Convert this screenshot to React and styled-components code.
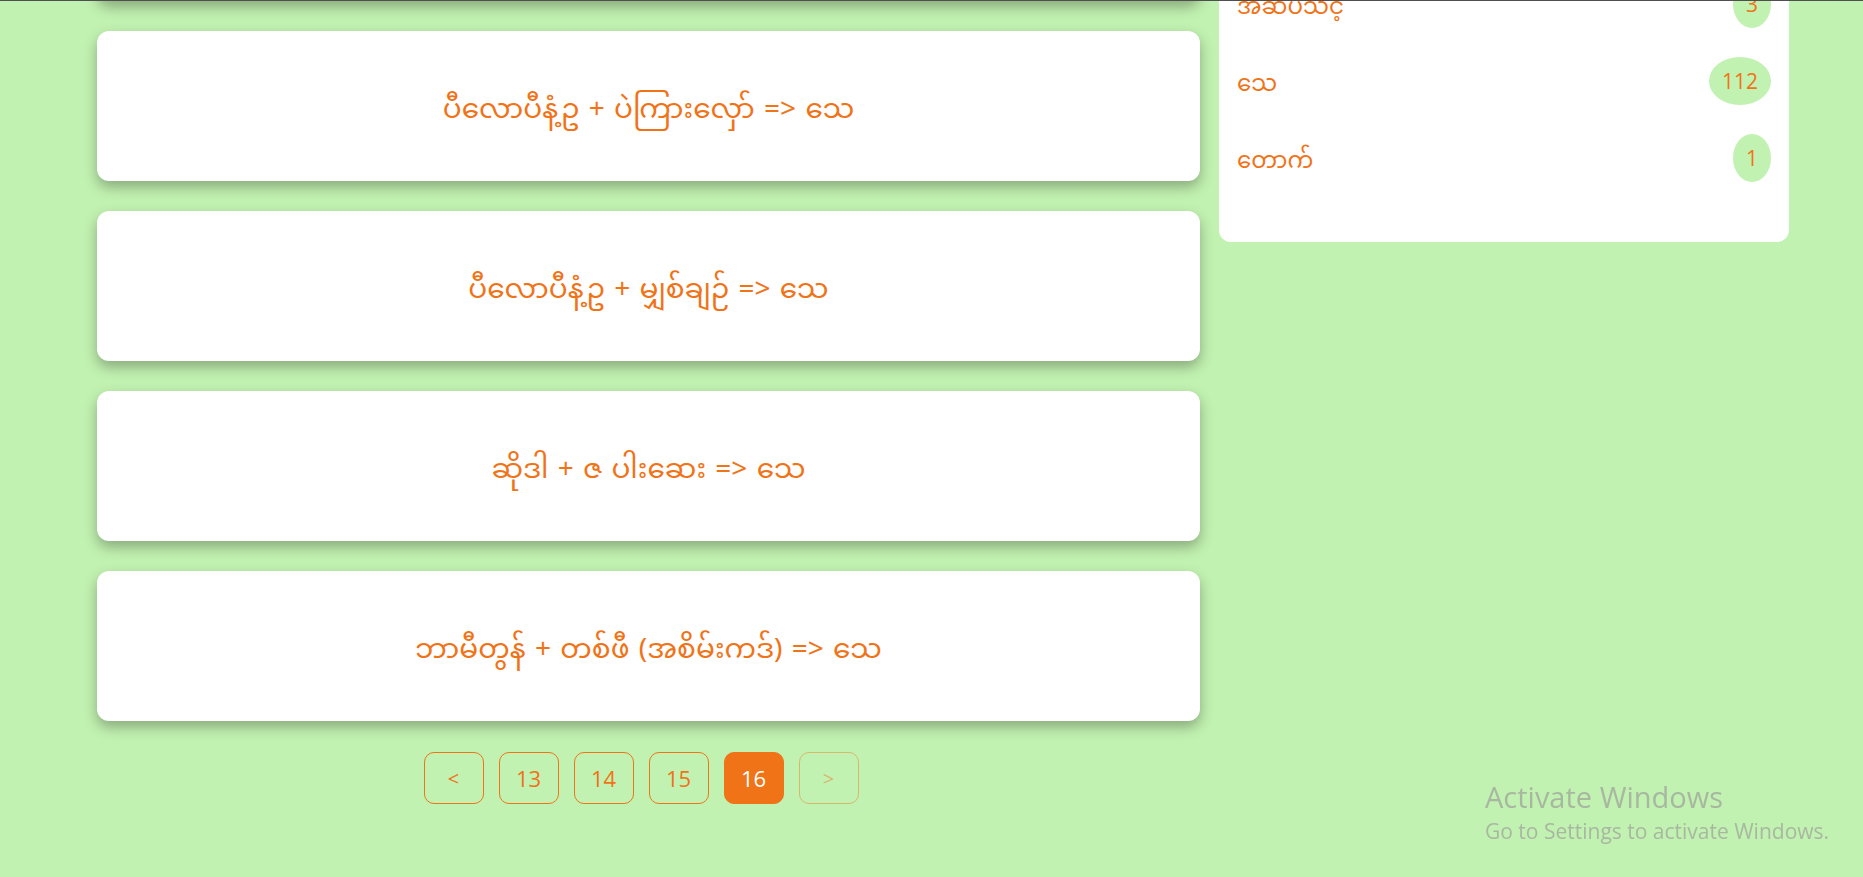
import React from "react";
import styled, { createGlobalStyle } from "styled-components";

const ORANGE = "#f07318";
const GREEN = "#c2f2b1";
const MM = `"Noto Sans Myanmar", "Myanmar Text", Padauk, "Noto Sans", sans-serif`;
const UI = `"Open Sans", "Noto Sans", sans-serif`;

const Global = createGlobalStyle`
  html, body {
    margin: 0;
    padding: 0;
    background: ${GREEN};
    overflow: hidden;
  }
  body {
    font-family: ${UI};
    min-height: 100vh;
  }
`;

const WindowEdge = styled.div`
  position: fixed;
  top: 0;
  left: 0;
  right: 0;
  height: 1px;
  background: #4f4f4f;
  z-index: 10;
`;

const Page = styled.div`
  display: flex;
  align-items: flex-start;
  gap: 19px;
  padding: 30px 0 60px 97px;
  margin-top: -179px;
`;

const Main = styled.main`
  width: 1103px;
  display: flex;
  flex-direction: column;
  gap: 30px;
`;

const Card = styled.div`
  height: 150px;
  box-sizing: border-box;
  padding-top: 10px;
  background: #fff;
  border-radius: 12px;
  box-shadow: 0 6px 14px rgba(0, 0, 0, 0.3);
  display: flex;
  align-items: center;
  justify-content: center;
  font-family: ${MM};
  font-size: 28px;
  word-spacing: 2px;
  color: ${ORANGE};
`;

const Pager = styled.nav`
  display: flex;
  justify-content: center;
  padding-top: 1px;
`;

const PageBtn = styled.button`
  width: 60px;
  height: 52px;
  margin-right: 15px;
  border: 1px solid ${ORANGE};
  border-radius: 10px;
  background: ${(p) => (p.$active ? ORANGE : "transparent")};
  color: ${(p) => (p.$active ? "#fff" : ORANGE)};
  opacity: ${(p) => (p.disabled ? 0.45 : 1)};
  font-family: ${UI};
  font-size: ${(p) => (p.$arrow ? "20px" : "22px")};
  padding: 0;
  display: flex;
  align-items: center;
  justify-content: center;
  cursor: pointer;
`;

const Sidebar = styled.aside`
  width: 570px;
  background: #fff;
  border-radius: 12px;
  padding: 37px 18px 46px 18px;
  box-sizing: border-box;
`;

const Row = styled.div`
  height: 77px;
  display: flex;
  align-items: center;
  justify-content: space-between;
`;

const Label = styled.span`
  font-family: ${MM};
  font-size: 23px;
  padding-top: 10px;
  color: ${ORANGE};
`;

const Badge = styled.span`
  min-width: 12px;
  height: 48px;
  padding: 0 13px;
  border-radius: 50%;
  background: ${GREEN};
  color: ${ORANGE};
  font-family: ${UI};
  font-size: 21px;
  display: flex;
  align-items: center;
  justify-content: center;
`;

const Watermark = styled.div`
  position: fixed;
  left: 1485px;
  top: 778px;
  color: #a8b8a0;
  font-family: ${UI};
  pointer-events: none;
`;

const WmTitle = styled.div`
  font-size: 29px;
  line-height: 38px;
`;

const WmSub = styled.div`
  font-size: 21px;
  line-height: 30px;
`;

const cards = [
  "ကြက်ဥ + ပဲပြုတ် => သေ",
  "ပီလောပီနံ့ဥ + ပဲကြားလှော် => သေ",
  "ပီလောပီနံ့ဥ + မျှစ်ချဉ် => သေ",
  "ဆိုဒါ + ဇ ပါးဆေး => သေ",
  "ဘာမီတွန် + တစ်ဖီ (အစိမ်းကဒ်) => သေ",
];

const categories = [
  { name: "ဗိုက်နာ", count: 5 },
  { name: "အဆိပ်သင့်", count: 3 },
  { name: "သေ", count: 112 },
  { name: "တောက်", count: 1 },
];

export default function App() {
  return (
    <>
      <Global />
      <WindowEdge />
      <Page>
        <Main>
          {cards.map((c, i) => (
            <Card key={i}>{c}</Card>
          ))}
          <Pager>
            <PageBtn $arrow>&lt;</PageBtn>
            <PageBtn>13</PageBtn>
            <PageBtn>14</PageBtn>
            <PageBtn>15</PageBtn>
            <PageBtn $active>16</PageBtn>
            <PageBtn $arrow disabled>&gt;</PageBtn>
          </Pager>
        </Main>
        <Sidebar>
          {categories.map((c) => (
            <Row key={c.name}>
              <Label>{c.name}</Label>
              <Badge>{c.count}</Badge>
            </Row>
          ))}
        </Sidebar>
      </Page>
      <Watermark>
        <WmTitle>Activate Windows</WmTitle>
        <WmSub>Go to Settings to activate Windows.</WmSub>
      </Watermark>
    </>
  );
}
